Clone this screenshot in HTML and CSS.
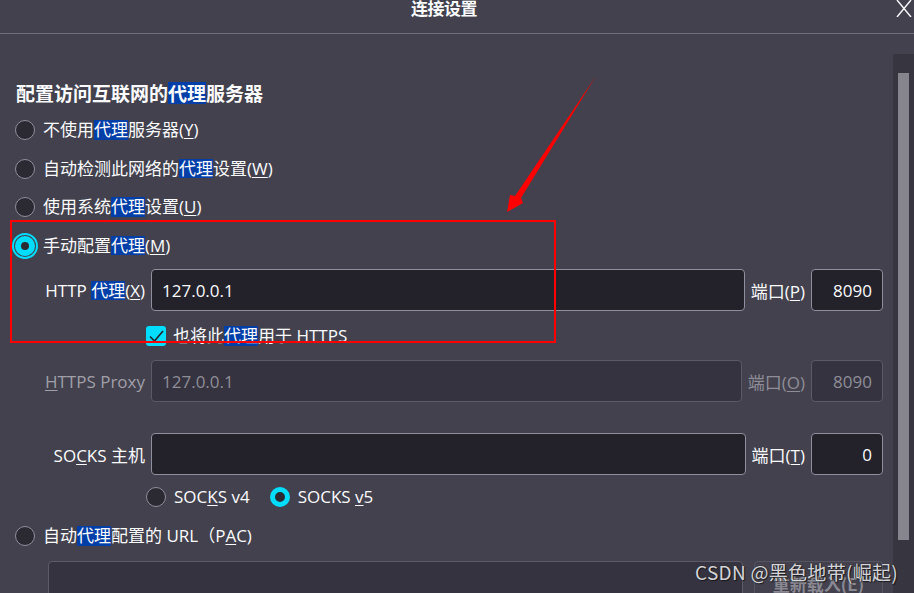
FILE: index.html
```html
<!DOCTYPE html>
<html lang="zh-CN">
<head>
<meta charset="utf-8">
<title>连接设置</title>
<link rel="stylesheet" href="styles.css">
</head>
<body>
<div class="dialog">
  <header class="titlebar">
    <div class="title">连接设置</div>
    <button class="close" aria-label="关闭">
      <svg width="16" height="17" viewBox="0 0 16 17"><path d="M1 0 L15 17 M15 0 L1 17" stroke="#fbfbfe" stroke-width="1.4" fill="none"/></svg>
    </button>
  </header>
  <div class="body">
    <main class="content">
      <h1 class="heading">配置访问互联网的<span class="hl">代理</span>服务器</h1>

      <div class="radio-row"><span class="radio"></span><span class="label">不使用<span class="hl">代理</span>服务器(<u>Y</u>)</span></div>
      <div class="radio-row"><span class="radio"></span><span class="label">自动检测此网络的<span class="hl">代理</span>设置(<u>W</u>)</span></div>
      <div class="radio-row"><span class="radio"></span><span class="label">使用系统<span class="hl">代理</span>设置(<u>U</u>)</span></div>
      <div class="radio-row"><span class="radio checked focus"></span><span class="label">手动配置<span class="hl">代理</span>(<u>M</u>)</span></div>

      <div class="field first">
        <label class="field-label">HTTP <span class="hl">代理</span>(<u>X</u>)</label>
        <div class="input">127.0.0.1</div>
        <label class="port-label">端口(<u>P</u>)</label>
        <div class="input port">8090</div>
      </div>

      <div class="check-row">
        <span class="checkbox"><svg width="20" height="20" viewBox="0 0 20 20"><path d="M4 10.5 L8.5 15 L17 5" stroke="#23222b" stroke-width="1.6" fill="none"/></svg></span>
        <span class="label">也将此<span class="hl">代理</span>用于 HTTPS</span>
      </div>

      <div class="field https disabled">
        <label class="field-label"><u>H</u>TTPS Proxy</label>
        <div class="input">127.0.0.1</div>
        <label class="port-label">端口(<u>O</u>)</label>
        <div class="input port">8090</div>
      </div>

      <div class="field socks">
        <label class="field-label">SO<u>C</u>KS 主机</label>
        <div class="input"></div>
        <label class="port-label">端口(<u>T</u>)</label>
        <div class="input port">0</div>
      </div>

      <div class="version-row">
        <span class="opt"><span class="radio"></span><span class="label">SOC<u>K</u>S v4</span></span>
        <span class="opt"><span class="radio checked"></span><span class="label">SOCKS <u>v</u>5</span></span>
      </div>

      <div class="radio-row pac"><span class="radio"></span><span class="label">自动<span class="hl">代理</span>配置的 URL（P<u>A</u>C)</span></div>

      <div class="pac-field">
        <div class="input pac-input"></div>
        <button class="reload">重新载入(<u>E</u>)</button>
      </div>
    </main>
    <div class="scrollbar"><div class="thumb"></div></div>
  </div>

  <div class="annotation-box"></div>
  <svg class="annotation-arrow" width="914" height="593" viewBox="0 0 914 593">
    <polygon points="596,76 521,198 523,203 507,212 510,195 515,196" fill="#ff0000"/>
  </svg>
  <div class="watermark">CSDN @黑色地带(崛起)</div>
</div>
</body>
</html>
```
FILE: styles.css
```css
* { box-sizing: border-box; }
html, body { margin: 0; padding: 0; }
body {
  width: 914px;
  height: 593px;
  overflow: hidden;
  background: #42414d;
  font-family: "Open Sans", "Noto Sans CJK SC", sans-serif;
  font-size: 17px;
  color: #fbfbfe;
}
u { text-decoration-thickness: 1px; text-underline-offset: 2px; }

.dialog {
  position: relative;
  width: 914px;
  height: 593px;
  display: flex;
  flex-direction: column;
}

.titlebar {
  height: 34px;
  flex: none;
  border-bottom: 1px solid #6d6c77;
  display: grid;
  grid-template-columns: 411px auto 1fr;
  align-items: start;
}
.title {
  grid-column: 2;
  font-family: "Noto Sans CJK SC", sans-serif;
  font-weight: 700;
  font-size: 17px;
  line-height: 18px;
  margin-top: -1px;
  letter-spacing: -0.5px;
}
.close {
  grid-column: 3;
  justify-self: end;
  background: none;
  border: 0;
  padding: 0;
  margin: 0 2px 0 0;
  width: 16px;
  height: 17px;
  display: block;
}
.close svg { display: block; }

.body {
  flex: 1;
  display: flex;
  min-height: 0;
}
.content {
  flex: 1;
  padding: 47px 10px 0 15px;
  min-width: 0;
}
.scrollbar {
  width: 21px;
  flex: none;
  margin-top: 20px;
  background: #37353f;
  padding: 19px 5px 0 5px;
}
.thumb {
  width: 11px;
  height: 467px;
  background: #86858d;
}

.heading {
  margin: 0 0 0 1px;
  font-family: "Noto Sans CJK SC", sans-serif;
  font-size: 19px;
  font-weight: 700;
  line-height: 24px;
}

.hl {
  display: inline-block;
  background: #003ea8;
  line-height: 1.15;
}

.label { line-height: 20px; white-space: nowrap; }

.radio-row {
  height: 38.5px;
  display: flex;
  align-items: center;
  gap: 8px;
}
.heading + .radio-row { margin-top: 6px; }

.radio {
  width: 20px;
  height: 20px;
  flex: none;
  border-radius: 50%;
  background: #2b2a33;
  border: 1px solid #8f8f9d;
}
.radio.checked {
  background: #2b2a33;
  border: 6px solid #00ddff;
}
.radio.focus {
  outline: 2px solid #00ddff;
  outline-offset: 1px;
}

.field {
  display: flex;
  align-items: center;
  gap: 6px;
  padding-left: 28px;
  height: 42px;
}
.field.first { margin-top: 4px; }
.field.https { margin-top: 12px; }
.field.socks { margin-top: 31px; }

.field-label {
  width: 102px;
  flex: none;
  text-align: right;
  white-space: nowrap;
}
.input {
  flex: 1;
  height: 42px;
  background: #23222b;
  border: 1px solid #8f8f9d;
  border-radius: 4px;
  padding: 0 10px;
  display: flex;
  align-items: center;
}
.port-label { white-space: nowrap; flex: none; }
.input.port {
  flex: none;
  width: 72px;
  justify-content: flex-end;
}

.field.disabled { color: #8f8e98; }
.field.disabled .field-label { color: #a09fa9; }
.field.disabled .input {
  background: #35333f;
  border-color: #5b5a66;
}

.check-row {
  margin-top: 13px;
  height: 24px;
  display: flex;
  align-items: center;
  gap: 7px;
  padding-left: 131px;
}
.checkbox {
  width: 20px;
  height: 20px;
  border-radius: 3px;
  background: #00ddff;
  flex: none;
}
.checkbox svg { display: block; }

.version-row {
  margin-top: 7px;
  height: 30px;
  display: flex;
  align-items: center;
  gap: 20px;
  padding-left: 131px;
}
.opt {
  display: flex;
  align-items: center;
  gap: 8px;
}
.opt .radio.checked { border-width: 5px; }

.radio-row.pac {
  margin-top: 9px;
  height: 30px;
}

.pac-field {
  margin-top: 10px;
  margin-left: 33px;
  display: flex;
  gap: 11px;
}
.pac-input {
  flex: 1;
  height: 44px;
  background: #35333f;
  border-color: #5b5a66;
}
.reload {
  width: 129px;
  height: 44px;
  flex: none;
  background: #42414d;
  border: 1px solid #55545f;
  border-radius: 4px;
  color: #8a8992;
  font-family: "Noto Sans CJK SC", sans-serif;
  font-weight: 700;
  font-size: 17px;
  padding: 0;
  margin-right: 0;
}

.annotation-box {
  position: absolute;
  left: 10px;
  top: 220px;
  width: 546px;
  height: 123px;
  border: 2px solid #ff0000;
  pointer-events: none;
}
.annotation-arrow {
  position: absolute;
  left: 0;
  top: 0;
  pointer-events: none;
}
.watermark {
  position: absolute;
  left: 695px;
  top: 558px;
  font-family: "Noto Sans CJK SC", sans-serif;
  font-size: 19px;
  letter-spacing: 0.3px;
  line-height: 28px;
  color: #d4d4d8;
  text-shadow: 0 0 1px #222, 1px 1px 1px rgba(0,0,0,0.6);
  white-space: nowrap;
}
```
